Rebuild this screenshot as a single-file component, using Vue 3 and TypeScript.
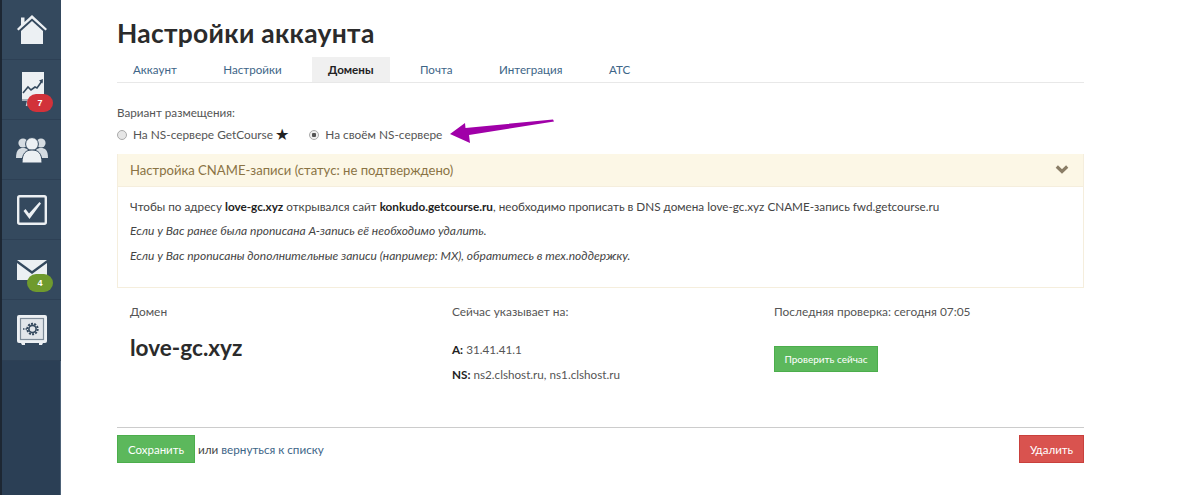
<script setup lang="ts">
const tabs = ['Аккаунт', 'Настройки', 'Домены', 'Почта', 'Интеграция', 'АТС']
</script>

<template>
  <div class="page">
    <aside class="side">
      <a class="nav">
        <svg width="32" height="30" viewBox="0 0 32 30">
          <path fill="#ecf0f3" d="M16 0 L31 14 L29.5 15.5 L16 3.5 L2.5 15.5 L1 14 L5 10 V2.5 H8.5 V7 Z" />
          <path fill="#ecf0f3" d="M16 6 L27 16 V29 H5 V16 Z" />
        </svg>
      </a>
      <a class="nav">
        <svg width="30" height="36" viewBox="0 0 30 36">
          <rect x="5" y="0" width="22" height="27" fill="#ecf0f3" />
          <path d="M6 21 L11 15 L14 18 L18 15 L20 16 L25 9" fill="none" stroke="#34495e" stroke-width="1.6" />
          <path d="M22 8.5 L26 7 L25.5 11.5 Z" fill="#34495e" />
          <path d="M5 28 H22 M11 28 L9.5 34" fill="none" stroke="#c9d1d8" stroke-width="1.6" />
        </svg>
        <span class="badge red">7</span>
      </a>
      <a class="nav">
        <svg width="32" height="26" viewBox="0 0 32 26">
          <circle cx="7" cy="6" r="4.6" fill="#d5dce2" />
          <circle cx="25" cy="6" r="4.6" fill="#d5dce2" />
          <path d="M0 21 C0 13 3 11 7 11 C11 11 14 13 14 21 Z" fill="#d5dce2" />
          <path d="M18 21 C18 13 21 11 25 11 C29 11 32 13 32 21 Z" fill="#d5dce2" />
          <circle cx="16" cy="7" r="6.4" fill="#ecf0f3" stroke="#34495e" stroke-width="1" />
          <path d="M6 26 C6 16 10 13 16 13 C22 13 26 16 26 26 Z" fill="#ecf0f3" stroke="#34495e" stroke-width="1" />
        </svg>
      </a>
      <a class="nav">
        <svg width="30" height="30" viewBox="0 0 30 30">
          <rect x="1.2" y="1.2" width="27.6" height="27.6" rx="1.5" fill="none" stroke="#ecf0f3" stroke-width="2.4" />
          <path d="M6.5 16 L8.5 14 L12 18.5 L22.5 7 L24 8.5 L12.5 24 Z" fill="#ecf0f3" />
        </svg>
      </a>
      <a class="nav">
        <svg width="30" height="20" viewBox="0 0 30 20">
          <path d="M0 0 H30 L15 11 Z" fill="#ecf0f3" />
          <path d="M0 3 L15 14 L30 3 V20 H0 Z" fill="#ecf0f3" />
        </svg>
        <span class="badge green">4</span>
      </a>
      <a class="nav">
        <svg width="30" height="30" viewBox="0 0 30 30">
          <rect x="0" y="0" width="30" height="28" rx="2" fill="#ecf0f3" />
          <rect x="3.5" y="3.5" width="23" height="21" fill="#e2e6ea" stroke="#7e8c99" stroke-width="1.2" />
          <path d="M4 28 H8 V30 H5 Z M22 28 H26 L25 30 H22 Z" fill="#ecf0f3" />
          <circle cx="15.5" cy="14" r="5.2" fill="none" stroke="#34495e" stroke-width="2" stroke-dasharray="2 1.2" />
          <circle cx="15.5" cy="14" r="3.6" fill="none" stroke="#34495e" stroke-width="1.6" />
          <path d="M6 14 H10" stroke="#34495e" stroke-width="1.5" stroke-dasharray="1.5 1" />
        </svg>
      </a>
    </aside>

    <main class="main">
      <h1 class="title">Настройки аккаунта</h1>
      <nav class="tabs">
        <a v-for="t in tabs" :key="t" class="tab" :class="{ active: t === 'Домены' }">{{ t }}</a>
      </nav>

      <div class="label">Вариант размещения:</div>
      <div class="radios">
        <label class="radio"><span class="dot"></span>На NS-сервере GetCourse<span class="star">★</span></label>
        <label class="radio second"><span class="dot on"></span>На своём NS-сервере</label>
      </div>

      <section class="panel">
        <header class="panel-head">
          <span>Настройка CNAME-записи (статус: не подтверждено)</span>
          <svg class="chev" width="14" height="10" viewBox="0 0 14 10">
            <path d="M1.8 1.5 L7 6.5 L12.2 1.5" fill="none" stroke="#8a7d66" stroke-width="3.2" />
          </svg>
        </header>
        <div class="panel-body">
          <p class="lead">Чтобы по адресу <b>love-gc.xyz</b> открывался сайт <b>konkudo.getcourse.ru</b>, необходимо прописать в DNS домена love-gc.xyz CNAME-запись fwd.getcourse.ru</p>
          <p class="it">Если у Вас ранее была прописана А-запись её необходимо удалить.</p>
          <p class="it">Если у Вас прописаны дополнительные записи (например: MX), обратитесь в тех.поддержку.</p>
        </div>
      </section>

      <section class="domain">
        <div class="col">
          <div class="cap">Домен</div>
          <div class="name">love-gc.xyz</div>
        </div>
        <div class="col">
          <div class="cap">Сейчас указывает на:</div>
          <p class="rec first"><b>A:</b> 31.41.41.1</p>
          <p class="rec"><b>NS:</b> ns2.clshost.ru, ns1.clshost.ru</p>
        </div>
        <div class="col">
          <div class="cap">Последняя проверка: сегодня 07:05</div>
          <button class="btn check">Проверить сейчас</button>
        </div>
      </section>

      <footer class="foot">
        <div class="left">
          <button class="btn save">Сохранить</button>
          <span class="or">или <a class="link">вернуться к списку</a></span>
        </div>
        <button class="btn del">Удалить</button>
      </footer>

      <svg class="arrow" width="110" height="30" viewBox="0 0 110 30">
        <path d="M1 15 L16 4 L16.5 9 L104 0.5 L105 2.5 L20 16 L21 24 Z" fill="#a000a8" />
      </svg>
    </main>
  </div>
</template>

<style>
html, body { margin: 0; background: #fff; }
</style>

<style scoped>
.page { display: flex; width: 1200px; height: 495px; overflow: hidden; font-family: "Lato", "Open Sans", "Liberation Sans", sans-serif; color: #444; font-size: 12px; }
.side { width: 59px; flex: none; background: #2b3f55; border-left: 2px solid #1d2733; box-shadow: inset -1px 0 0 #4d6278; }
.nav { position: relative; display: flex; align-items: center; justify-content: center; height: 60px; box-sizing: border-box; background: #34495e; border-bottom: 1px solid #2d4055; }
.nav:last-child { height: 61px; }
.badge { position: absolute; left: 25px; top: 34px; width: 26px; height: 18px; border-radius: 9px; color: #fff; font: bold 9px/18px "Liberation Sans", sans-serif; text-align: center; }
.red { background: #d2323a; }
.green { background: #6f9a2e; }
.main { position: relative; flex: none; width: 967px; margin-left: 56px; }
.title { margin: 17px 0 0; font-size: 26.4px; line-height: 32px; font-weight: 700; color: #2b2b2b; letter-spacing: 0.3px; }
.tabs { display: flex; gap: 14.5px; margin-top: 8px; height: 25px; border-bottom: 1px solid #e8e8e8; }
.tab { padding: 0 16px; line-height: 25px; color: #3d6587; font-size: 11.6px; }
.tab.active { background: #f0f0f0; color: #222; font-weight: 700; }
.label { margin-top: 21px; line-height: 16px; font-size: 11.7px; color: #555; }
.radios { display: flex; margin-top: 7px; height: 16px; line-height: 16px; font-size: 11.85px; color: #555; }
.radio { display: flex; align-items: center; }
.second { margin-left: 20px; }
.dot { width: 10px; height: 10px; border-radius: 50%; margin-right: 6px; background: #e6e6e6; border: 1px solid #aaa; box-sizing: border-box; }
.dot.on { background: radial-gradient(circle, #555 0 2px, #efefef 2.5px); }
.star { color: #222; font-size: 16px; margin-left: 2px; font-family: "DejaVu Sans", sans-serif; }
.panel { margin-top: 11px; border: 1px solid #f5eedd; border-top: 0; }
.panel-head { display: flex; align-items: center; justify-content: space-between; height: 32px; padding: 0 14px 0 12px; background: #fcf7e6; border-bottom: 1px solid #f5eedd; color: #8a7344; font-size: 13.1px; }
.panel-body { height: 100px; padding: 11px 12px 0; box-sizing: border-box; font-size: 11.72px; color: #444; }
.panel-body p { margin: 0 0 9px; line-height: 16px; }
.panel-body p.it { font-style: italic; font-size: 12px; }
.panel-body b { color: #222; }
.domain { display: grid; grid-template-columns: repeat(3, 322px); margin-top: 16px; padding-left: 13px; height: 124px; border-bottom: 1px solid #ccc; box-sizing: border-box; }
.cap { line-height: 16px; font-size: 11.9px; color: #555; }
.name { margin-top: 15px; font-size: 22.6px; line-height: 26px; font-weight: 700; color: #2b2b2b; }
.rec { margin: 0; line-height: 16px; font-size: 11.7px; color: #555; }
.rec.first { margin-top: 21px; margin-bottom: 9px; }
.rec b { color: #222; }
.btn { border: 1px solid; border-radius: 0; color: #fff; font-family: inherit; padding: 0; display: block; }
.check { margin-top: 26px; width: 104px; height: 26px; background: #5cb85c; border-color: #4cae4c; font-size: 10px; }
.foot { display: flex; justify-content: space-between; margin-top: 7px; }
.left { display: flex; align-items: center; }
.save { width: 78px; height: 28px; background: #5cb85c; border-color: #4cae4c; font-size: 11.5px; }
.or { margin-left: 3px; font-size: 11.7px; color: #444; }
.link { color: #3d6587; }
.del { width: 65px; height: 28px; background: #d9534f; border-color: #c9403c; font-size: 11.5px; }
.arrow { position: absolute; left: 332px; top: 119px; }
</style>
